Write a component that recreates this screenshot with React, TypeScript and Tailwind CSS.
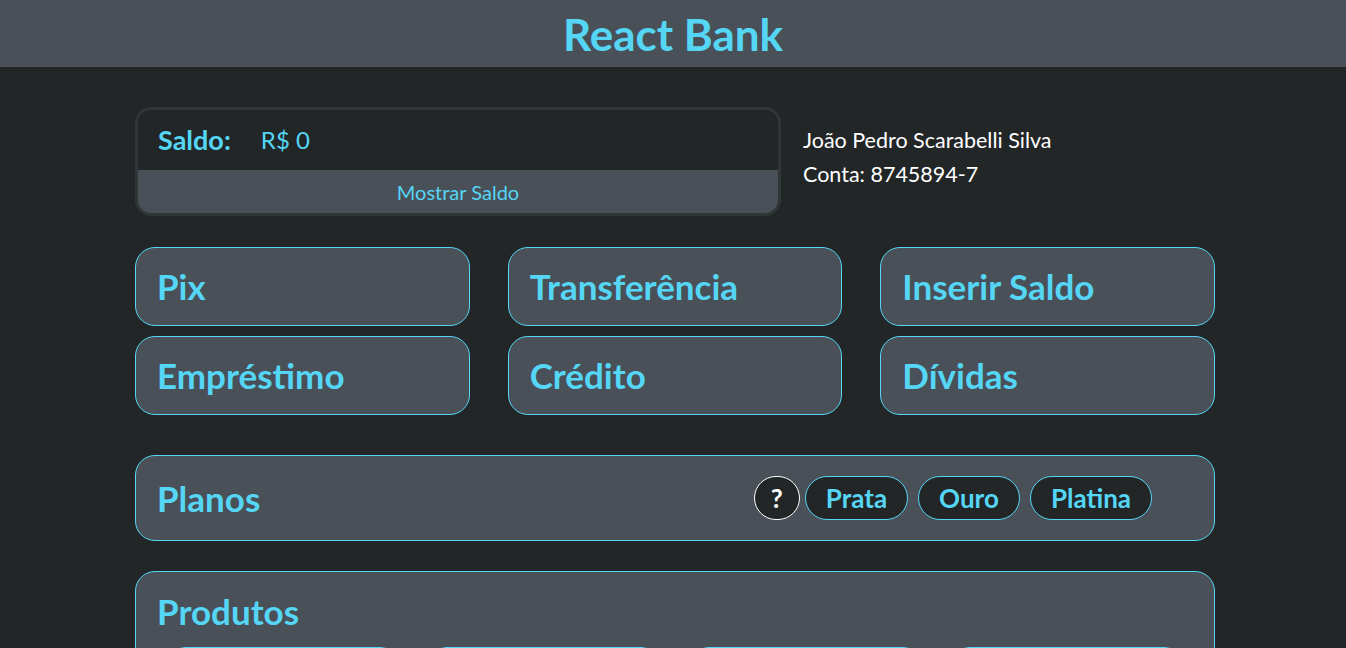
import React, { useState } from 'react';

const font = { fontFamily: '"Lato", "Noto Sans", sans-serif' };

const actions = ['Pix', 'Transferência', 'Inserir Saldo', 'Empréstimo', 'Crédito', 'Dívidas'];
const planos = ['Prata', 'Ouro', 'Platina'];
const produtos = [1, 2, 3, 4];

export default function App() {
    const [mostrar, setMostrar] = useState(false);

    return (
        <div className="min-h-screen bg-[#222627]" style={font}>
            {/* Header */}
            <header className="h-[67px] bg-[#4a5058] flex items-center justify-center">
                <h1 className="text-[44px] font-bold text-[#55d6f5] leading-none">React Bank</h1>
            </header>

            <main className="w-[1080px] ml-[135px] pt-10 pb-10">
                {/* Saldo + conta */}
                <div className="flex items-start">
                    <div className="w-[646px] border-[3px] border-[#303536] rounded-2xl overflow-hidden">
                        <div className="h-[60px] flex items-center pl-5 gap-[30px]">
                            <span className="text-[27px] font-bold text-[#55d6f5]">Saldo:</span>
                            <span className="text-[24px] text-[#55d6f5]">{mostrar ? 'R$ 1.250,00' : 'R$ 0'}</span>
                        </div>
                        <button
                            onClick={() => setMostrar(!mostrar)}
                            className="w-full h-[43px] bg-[#4a5058] text-[20px] text-[#55d6f5] flex items-center justify-center"
                        >
                            Mostrar Saldo
                        </button>
                    </div>
                    <div className="ml-[22px] pt-[16px] text-white text-[21.5px] leading-[34px]">
                        <p>João Pedro Scarabelli Silva</p>
                        <p>Conta: 8745894-7</p>
                    </div>
                </div>

                {/* Ações */}
                <div className="mt-[31px] grid grid-cols-3 gap-x-[38px] gap-y-[10px]">
                    {actions.map((a) => (
                        <button
                            key={a}
                            className="h-[79px] rounded-[20px] border border-[#55d6f5] bg-[#4a5058] text-left pl-[21px] text-[35px] font-bold text-[#55d6f5]"
                        >
                            {a}
                        </button>
                    ))}
                </div>

                {/* Planos */}
                <div className="mt-[40px] h-[86px] rounded-[20px] border border-[#55d6f5] bg-[#4a5058] flex items-center justify-between pl-[21px] pr-[62px]">
                    <h2 className="text-[35px] font-bold text-[#55d6f5]">Planos</h2>
                    <div className="flex items-center gap-[10px]">
                        <button className="w-[46px] h-[44px] rounded-full border border-white bg-[#222627] text-white text-[26px] font-bold -mr-[5px]">
                            ?
                        </button>
                        {planos.map((p) => (
                            <button
                                key={p}
                                className="h-[44px] px-5 rounded-full border border-[#55d6f5] bg-[#222627] text-[26px] font-bold text-[#55d6f5]"
                            >
                                {p}
                            </button>
                        ))}
                    </div>
                </div>

                {/* Produtos */}
                <div className="mt-[30px] rounded-[20px] border border-[#55d6f5] bg-[#4a5058] pt-[19px] pb-6">
                    <h2 className="pl-[21px] text-[35px] font-bold text-[#55d6f5] leading-[40px]">Produtos</h2>
                    <div className="mt-[16px] flex justify-evenly">
                        {produtos.map((p) => (
                            <div
                                key={p}
                                className="w-[228px] h-[200px] rounded-[16px] border border-[#55d6f5] bg-[#4a5058]"
                            />
                        ))}
                    </div>
                </div>
            </main>
        </div>
    );
}
